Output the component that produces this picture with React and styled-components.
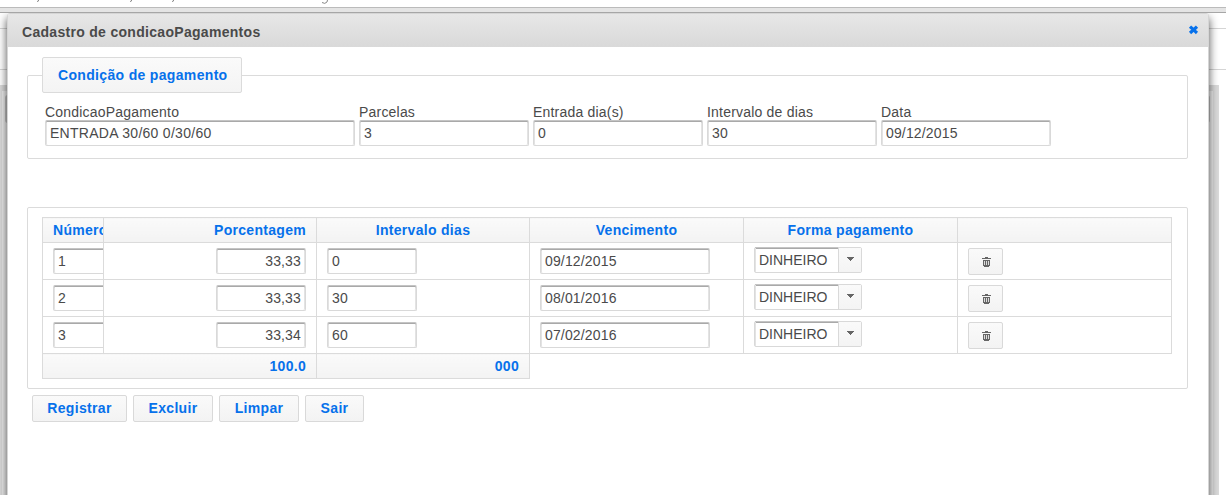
import React from 'react';
import styled, { createGlobalStyle } from 'styled-components';

const Global = createGlobalStyle`
  *, *::before, *::after { box-sizing: border-box; }
  body { margin: 0; background: #fff; overflow: hidden; }
  body, input, button { font-family: "Liberation Sans", Arial, sans-serif; font-size: 14px; color: #4a4a4a; }
`;

const Page = styled.div`
  position: relative;
  width: 1226px;
  height: 495px;
  overflow: hidden;
`;

const Toolbar = styled.div`
  position: relative;
  z-index: 2;
  height: 13px;
  padding-top: 7px;
  background: #fff;
  &::after {
    content: '';
    display: block;
    height: 6px;
    background: #e4e4e4;
    border-top: 1px solid #bbb;
    border-bottom: 1px solid #a6a6a6;
  }
`;

const ClippedLine = styled.div`
  position: absolute;
  z-index: 3;
  left: 0;
  top: 0;
  height: 5px;
  width: 340px;
  overflow: hidden;
  svg { display: block; }
`;

const Backdrop = styled.div`
  display: flex;
  flex-direction: column;
  height: 482px;
`;

const Band = styled.div`
  height: ${(p) => p.$h}px;
  border-bottom: 1px solid #d5d5d5;
`;

const BackPanel = styled.div`
  flex: 1;
  margin: 15px 7px 0 0;
  background: #dadada;
  padding: 6px 6px 0 2px;
`;

const BackInner = styled.div`
  height: 100%;
  background: #eee;
  padding: 4px 3px 0;
  &::after {
    content: '';
    display: block;
    height: 28px;
    background: #c4c4c4;
    border-radius: 3px;
  }
`;

const Dialog = styled.section`
  position: absolute;
  left: 7px;
  top: 13px;
  width: 1202px;
  height: 520px;
  background: #fff;
  border: 1px solid #d5d5d5;
  border-radius: 3px;
  box-shadow: 0 5px 10px rgba(0, 0, 0, 0.7);
`;

const TitleBar = styled.header`
  display: flex;
  justify-content: space-between;
  height: 33px;
  padding: 10px 9px 0 14px;
  background: linear-gradient(#e7e7e7, #d9d9d9);
  font-weight: bold;
  letter-spacing: 0.3px;
  line-height: 16px;
  svg { display: block; }
`;

const Body = styled.div`
  padding: 10px 20px 0 19px;
`;

const Fieldset = styled.section`
  position: relative;
  height: 84px;
  margin-top: 18px;
  padding: 28px 17px 0;
  border: 1px solid #dbdbdb;
  border-radius: 2px;
`;

const Legend = styled.div`
  position: absolute;
  left: 14px;
  top: -19px;
  width: 200px;
  height: 36px;
  padding-left: 15px;
  border: 1px solid #dbdbdb;
  border-radius: 2px;
  background: linear-gradient(#fafafa, #f4f4f4);
  color: #0671eb;
  font-weight: bold;
  letter-spacing: 0.33px;
  line-height: 35px;
`;

const Fields = styled.div`
  display: flex;
  gap: 4px;
`;

const Input = styled.input`
  display: block;
  width: ${(p) => p.$w}px;
  height: 26px;
  padding: 0 ${(p) => (p.$right ? 4 : 5)}px 0 4px;
  border: 1px solid #d9d9d9;
  border-top-color: #c4c4c4;
  border-radius: 2px;
  background: #fff;
  box-shadow: inset 0 1px 0 #a9a9a9, inset 1px 0 0 #e3e3e3, inset -1px 0 0 #e3e3e3;
  text-align: ${(p) => (p.$right ? 'right' : 'left')};
  letter-spacing: ${(p) => p.$spacing || 0.15}px;
  outline: none;
`;

const Field = styled.label`
  display: block;
  width: ${(p) => p.$w}px;
  line-height: 17px;
  letter-spacing: 0.2px;
  ${Input} { margin-top: -1px; }
`;

const TablePanel = styled.section`
  height: 182px;
  margin-top: 48px;
  padding: 9px 15px 0 14px;
  border: 1px solid #dbdbdb;
  border-radius: 2px;
`;

const Table = styled.table`
  width: 1130px;
  table-layout: fixed;
  border-collapse: collapse;
`;

const HeadCell = styled.th`
  height: 25px;
  padding: 0 10px;
  border: 1px solid #dbdbdb;
  background: linear-gradient(#fafafa, #f3f3f3);
  color: #0671eb;
  font-weight: bold;
  letter-spacing: 0.3px;
  line-height: 16px;
  text-align: ${(p) => p.$align || 'center'};
  overflow: hidden;
  white-space: nowrap;
`;

const Cell = styled.td`
  height: 37px;
  padding: 0 10px;
  border: 1px solid #dbdbdb;
  overflow: hidden;
`;

const CellBox = styled.div`
  display: flex;
  align-items: flex-start;
  height: 27px;
  justify-content: ${(p) => (p.$right ? 'flex-end' : 'flex-start')};
`;

const Select = styled.div`
  display: flex;
  width: 108px;
  height: 26px;
  border: 1px solid #d9d9d9;
  border-radius: 2px;
  margin-top: -1px;
`;

const SelectValue = styled.span`
  flex: 1;
  padding-left: 3px;
  line-height: 24px;
  border-left: 1px solid #e3e3e3;
  box-shadow: inset 0 1px 0 #a9a9a9, 0 -1px 0 #c4c4c4;
`;

const SelectArrow = styled.span`
  display: flex;
  justify-content: center;
  width: 23px;
  padding: 9px 0 0 1px;
  border-left: 1px solid #d9d9d9;
  background: linear-gradient(#fafafa, #f4f4f4);
`;

const Button = styled.button`
  width: ${(p) => p.$w}px;
  height: 27px;
  padding: 0;
  border: 1px solid #d9d9d9;
  border-radius: 2px;
  background: linear-gradient(#fafafa, #f3f3f3);
  color: #0671eb;
  font-weight: bold;
  letter-spacing: 0.33px;
  line-height: 25px;
  text-align: center;
  svg { display: block; margin: 2px 0 0 13px; }
`;

const Actions = styled.div`
  display: flex;
  gap: 6px;
  padding: 6px 5px;
`;

const CloseIcon = () => (
  <svg width="11" height="11" viewBox="0 0 11 11" stroke="#0671eb" strokeWidth="3.2" strokeLinecap="square">
    <path d="M3.2 3.7l4.6 4.2M7.8 3.7l-4.6 4.2" />
  </svg>
);

const TrashIcon = () => (
  <svg width="9" height="10" viewBox="0 0 9 10" fill="#666" shapeRendering="crispEdges">
    <path d="M3 0h3v1h3v1H0V1h3zM1 3h7v6H7v1H2V9H1z" />
    <path d="M2 4h1v4H2zM4 4h1v4H4zM6 4h1v4H6z" fill="#ddd" />
  </svg>
);

const ArrowIcon = () => (
  <svg width="7" height="4" viewBox="0 0 7 4" fill="#666" shapeRendering="crispEdges">
    <path d="M0 0h7v1H6v1H5v1H4v1H3V3H2V2H1V1H0z" />
  </svg>
);

const fields = [
  ['CondicaoPagamento', 'ENTRADA 30/60 0/30/60', 310, 0.28],
  ['Parcelas', '3', 170],
  ['Entrada dia(s)', '0', 170],
  ['Intervalo de dias', '30', 170],
  ['Data', '09/12/2015', 170],
];

const rows = [
  ['1', '33,33', '0', '09/12/2015'],
  ['2', '33,33', '30', '08/01/2016'],
  ['3', '33,34', '60', '07/02/2016'],
];

export default function App() {
  return (
    <Page>
      <Global />
      <Toolbar />
      <ClippedLine>
        <svg width="340" height="5" fill="none" stroke="#8a8a8a">
          <path d="M38.5 0v1l-1.5.5M131.5 0v1l-1.5.5M173.5 0v1l-1.5.5M322 2.5q3 2 5-.5l.5-2" />
        </svg>
      </ClippedLine>
      <Backdrop>
        <Band $h={16} />
        <Band $h={41} />
        <BackPanel><BackInner /></BackPanel>
      </Backdrop>
      <Dialog>
        <TitleBar>
          <span>Cadastro de condicaoPagamentos</span>
          <CloseIcon />
        </TitleBar>
        <Body>
          <Fieldset>
            <Legend>Condição de pagamento</Legend>
            <Fields>
              {fields.map(([label, value, w, spacing]) => (
                <Field key={label} $w={w}>
                  {label}
                  <Input $w={w} $spacing={spacing} defaultValue={value} />
                </Field>
              ))}
            </Fields>
          </Fieldset>
          <TablePanel>
            <Table>
              <colgroup>
                {[61, 213, 213, 214, 214, 214].map((w, i) => <col key={i} width={w} />)}
              </colgroup>
              <thead>
                <tr>
                  <HeadCell $align="left">Número</HeadCell>
                  <HeadCell $align="right">Porcentagem</HeadCell>
                  <HeadCell>Intervalo dias</HeadCell>
                  <HeadCell>Vencimento</HeadCell>
                  <HeadCell>Forma pagamento</HeadCell>
                  <HeadCell />
                </tr>
              </thead>
              <tbody>
                {rows.map(([n, pct, days, due]) => (
                  <tr key={n}>
                    <Cell><CellBox><Input $w={90} defaultValue={n} /></CellBox></Cell>
                    <Cell><CellBox $right><Input $w={90} $right defaultValue={pct} /></CellBox></Cell>
                    <Cell><CellBox><Input $w={90} defaultValue={days} /></CellBox></Cell>
                    <Cell><CellBox><Input $w={170} defaultValue={due} /></CellBox></Cell>
                    <Cell>
                      <CellBox>
                        <Select>
                          <SelectValue>DINHEIRO</SelectValue>
                          <SelectArrow><ArrowIcon /></SelectArrow>
                        </Select>
                      </CellBox>
                    </Cell>
                    <Cell><CellBox><Button $w={35} aria-label="Excluir parcela"><TrashIcon /></Button></CellBox></Cell>
                  </tr>
                ))}
              </tbody>
              <tfoot>
                <tr>
                  <HeadCell colSpan={2} $align="right">100.0</HeadCell>
                  <HeadCell $align="right">000</HeadCell>
                </tr>
              </tfoot>
            </Table>
          </TablePanel>
          <Actions>
            <Button $w={95}>Registrar</Button>
            <Button $w={80}>Excluir</Button>
            <Button $w={80}>Limpar</Button>
            <Button $w={59}>Sair</Button>
          </Actions>
        </Body>
      </Dialog>
    </Page>
  );
}
